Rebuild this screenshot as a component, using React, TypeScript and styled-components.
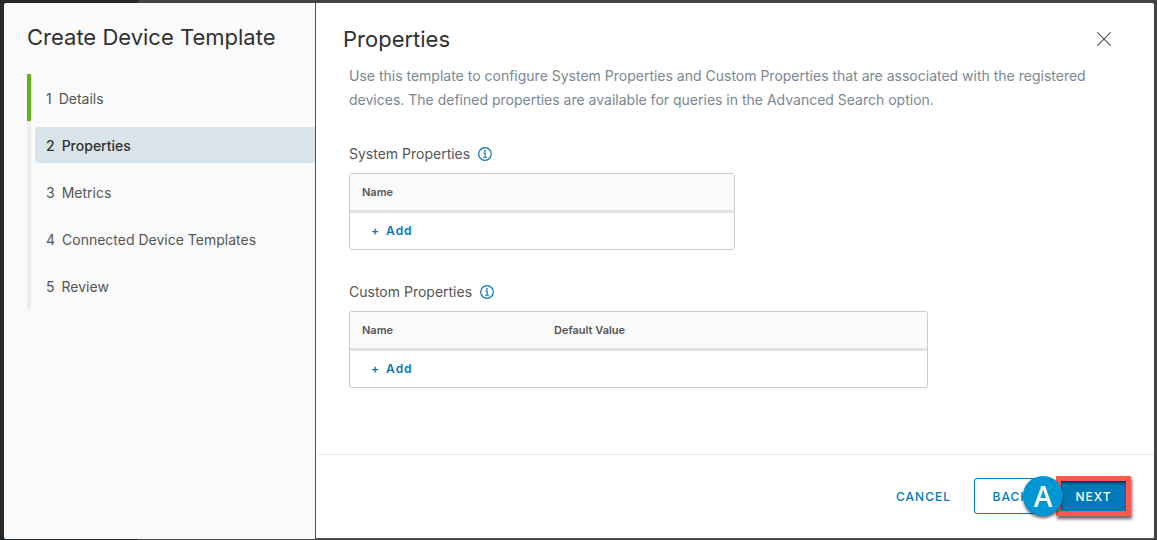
import React from 'react';
import styled, { createGlobalStyle } from 'styled-components';

const GlobalStyle = createGlobalStyle`
  *, *::before, *::after { box-sizing: border-box; }
  body {
    margin: 0;
    background: linear-gradient(90deg, #25292b 138px, #434244 138px);
    font-family: Inter, 'Open Sans', sans-serif;
    font-size: 14px;
    line-height: 24px;
    color: #565656;
  }
  button { font-family: inherit; cursor: pointer; }
  h1, h2, h3, p, ol { margin: 0; padding: 0; font-weight: 400; }
`;

const Page = styled.div`
  display: flex;
  min-height: 100vh;
  padding: 3px 3px 1px 4px;
`;

const Wizard = styled.div`
  flex: 1;
  display: grid;
  grid-template-columns: 311px minmax(0, 1fr);
  column-gap: 1px;
  background: #505050;
  border-radius: 2px;
  overflow: hidden;
`;

const Sidebar = styled.aside`
  background: #fafafa;
  padding: 18px 0 24px 23px;
`;

const Title = styled.h1`
  font-size: 22px;
  line-height: 32px;
  font-weight: 400;
  color: #313131;
`;

const Steps = styled.ol`
  list-style: none;
  margin-top: 21px;
`;

const Step = styled.li<{ $done?: boolean }>`
  display: flex;
  align-items: center;
  height: 47px;
  padding-left: 4px;
  border-left: 4px solid ${(p) => (p.$done ? '#60b515' : '#eeeeee')};
`;

const StepButton = styled.button<{ $active?: boolean }>`
  flex: 1;
  display: flex;
  gap: 7px;
  height: 36px;
  align-items: center;
  padding: 2px 11px 0;
  border: 0;
  border-radius: 3px 0 0 3px;
  background: ${(p) => (p.$active ? '#d9e4ea' : 'transparent')};
  color: ${(p) => (p.$active ? '#313131' : '#565656')};
  font-size: 14px;
  font-weight: ${(p) => (p.$active ? 500 : 400)};
`;

const Content = styled.main`
  display: flex;
  flex-direction: column;
  margin-bottom: 1px;
  background: #ffffff;
`;

const Header = styled.header`
  display: flex;
  align-items: center;
  justify-content: space-between;
  padding: 20px 41px 0 27px;
`;

const CloseButton = styled.button`
  display: flex;
  padding: 2px;
  border: 0;
  background: transparent;
  color: #565656;
`;

const Body = styled.div`
  flex: 1;
  padding: 9px 33px 24px;
`;

const Intro = styled.p`
  max-width: 770px;
  color: #798893;
`;

const Section = styled.section`
  margin-top: 30px;
`;

const SectionTitle = styled.h2`
  display: flex;
  align-items: center;
  gap: 8px;
  font-size: 14px;
  line-height: 24px;
  margin-bottom: 7px;
`;

const InfoButton = styled.button`
  display: flex;
  padding: 0;
  border: 0;
  background: transparent;
  color: #0079b8;
`;

const GridFrame = styled.div<{ $width: number }>`
  max-width: ${(p) => p.$width}px;
  border: 1px solid #cccccc;
  border-radius: 3px;
  overflow: hidden;
`;

const Grid = styled.table`
  width: 100%;
  border-collapse: separate;
  border-spacing: 0;
  table-layout: fixed;
`;

const HeadCell = styled.th<{ $width?: number }>`
  width: ${(p) => (p.$width ? `${p.$width}px` : 'auto')};
  height: 39px;
  padding: 0 12px;
  border-bottom: 3px solid #dfe3e6;
  background: #fafafa;
  text-align: left;
  font-size: 11px;
  line-height: 16px;
  font-weight: 600;
`;

const Cell = styled.td`
  height: 36px;
  padding: 0 21px;
`;

const AddButton = styled.button`
  display: flex;
  gap: 6px;
  padding: 0;
  border: 0;
  background: transparent;
  color: #0079b8;
  font-size: 12px;
  line-height: 24px;
  font-weight: 600;
  letter-spacing: 1px;
`;

const Footer = styled.footer`
  display: flex;
  align-items: center;
  justify-content: flex-end;
  gap: 8px;
  height: 84px;
  padding: 0 23px 1px 0;
  border-top: 1px solid #e8ebed;
`;

const Action = styled.button<{ $kind: 'link' | 'outline' | 'primary' }>`
  height: ${(p) => (p.$kind === 'primary' ? 30 : 36)}px;
  padding: 0 ${(p) => (p.$kind === 'primary' ? 12 : 15)}px;
  border: ${(p) => (p.$kind === 'outline' ? '1px solid #0079b8' : '0')};
  border-radius: ${(p) => (p.$kind === 'primary' ? 0 : 3)}px;
  background: ${(p) => (p.$kind === 'primary' ? '#0079b8' : 'transparent')};
  box-shadow: ${(p) => (p.$kind === 'primary' ? 'inset 0 3px 3px -1px #00334f' : 'none')};
  color: ${(p) => (p.$kind === 'primary' ? '#ffffff' : '#0079b8')};
  font-size: 12px;
  font-weight: 500;
  letter-spacing: 1px;
  min-width: ${(p) => (p.$kind === 'outline' ? 74 : 65)}px;
`;

const Callout = styled.div`
  position: relative;
  border: 5px solid #ff5a4d;
  box-shadow: 1px 3px 3px rgba(0, 0, 0, 0.6);
  display: flex;
`;

const Marker = styled.span`
  position: absolute;
  left: -38px;
  top: -5px;
  width: 40px;
  height: 40px;
  border-radius: 50%;
  background: #0095d3;
  box-shadow: 0 2px 3px rgba(0, 0, 0, 0.6);
  color: #ffffff;
  font-family: 'Open Sans', sans-serif;
  font-size: 28px;
  line-height: 40px;
  font-weight: 600;
  text-align: center;
`;

const steps = ['Details', 'Properties', 'Metrics', 'Connected Device Templates', 'Review'];

const InfoIcon = () => (
  <svg width="14" height="14" viewBox="0 0 14 14" fill="none" stroke="currentColor" aria-hidden="true">
    <circle cx="7" cy="7" r="6.3" strokeWidth="1.2" />
    <circle cx="7" cy="3.9" r="0.9" fill="currentColor" stroke="none" />
    <path d="M5.4 6.1H7.2V10.3M5.1 10.3H9" strokeWidth="1.1" />
  </svg>
);

const CloseIcon = () => (
  <svg width="14" height="14" viewBox="0 0 14 14" fill="none" stroke="currentColor" aria-hidden="true">
    <path d="M0.7 0.7L13.3 13.3M13.3 0.7L0.7 13.3" strokeWidth="1.2" strokeLinecap="round" />
  </svg>
);

type PropertyGridProps = {
  title: string;
  width: number;
  columns: { label: string; width?: number }[];
};

const PropertyGrid = ({ title, width, columns }: PropertyGridProps) => (
  <Section>
    <SectionTitle>
      {title}
      <InfoButton type="button" aria-label={`About ${title}`}>
        <InfoIcon />
      </InfoButton>
    </SectionTitle>
    <GridFrame $width={width}>
      <Grid aria-label={title}>
        <thead>
          <tr>
            {columns.map((c) => (
              <HeadCell key={c.label} scope="col" $width={c.width}>
                {c.label}
              </HeadCell>
            ))}
          </tr>
        </thead>
        <tbody>
          <tr>
            <Cell colSpan={columns.length}>
              <AddButton type="button">
                <span>+</span>
                <span>Add</span>
              </AddButton>
            </Cell>
          </tr>
        </tbody>
      </Grid>
    </GridFrame>
  </Section>
);

export default function App() {
  return (
    <>
      <GlobalStyle />
      <Page>
        <Wizard role="dialog" aria-label="Create Device Template">
          <Sidebar>
            <Title>Create Device Template</Title>
            <Steps>
              {steps.map((name, i) => (
                <Step key={name} $done={i === 0}>
                  <StepButton type="button" $active={i === 1} aria-current={i === 1 ? 'step' : undefined}>
                    <span>{i + 1}</span>
                    <span>{name}</span>
                  </StepButton>
                </Step>
              ))}
            </Steps>
          </Sidebar>
          <Content>
            <Header>
              <Title as="h2">Properties</Title>
              <CloseButton type="button" aria-label="Close">
                <CloseIcon />
              </CloseButton>
            </Header>
            <Body>
              <Intro>
                Use this template to configure System Properties and Custom Properties that are associated with the
                registered devices. The defined properties are available for queries in the Advanced Search option.
              </Intro>
              <PropertyGrid title="System Properties" width={386} columns={[{ label: 'Name' }]} />
              <PropertyGrid
                title="Custom Properties"
                width={579}
                columns={[{ label: 'Name', width: 192 }, { label: 'Default Value' }]}
              />
            </Body>
            <Footer>
              <Action type="button" $kind="link">CANCEL</Action>
              <Action type="button" $kind="outline">BACK</Action>
              <Callout>
                <Action type="button" $kind="primary">NEXT</Action>
                <Marker>A</Marker>
              </Callout>
            </Footer>
          </Content>
        </Wizard>
      </Page>
    </>
  );
}
